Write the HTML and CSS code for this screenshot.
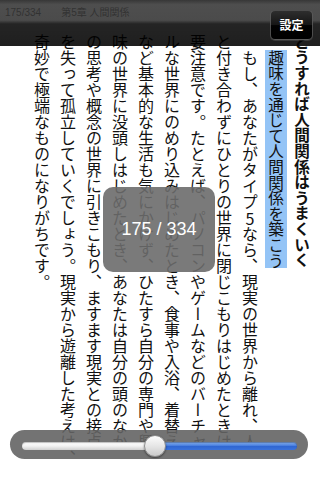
FILE: index.html
```html
<!DOCTYPE html>
<html lang="ja">
<head>
<meta charset="utf-8">
<title>Reader</title>
<link rel="stylesheet" href="styles.css">
</head>
<body>
<div class="screen">
  <div class="page">
    <div class="running-head"><span class="folio">175/334</span><span class="chapter">第5章 人間関係</span></div>
    <div class="text">
      <h1 class="heading">どうすれば人間関係はうまくいく</h1>
      <h2 class="sub">　<span class="mark">趣味を通じて人間関係を築こう</span></h2>
      <p class="body">　もし、あなたがタイプ<span class="tcy">5</span>なら、現実の世界から離れ、人<br>と付き合わずにひとりの世界に閉じこもりはじめたときは<br>要注意です。たとえば、パソコンやゲームなどのバーチャ<br>ルな世界にのめり込みはじめたとき、食事や入浴、着替え<br>など基本的な生活も気にかけず、ひたすら自分の専門や興<br>味の世界に没頭しはじめたとき、あなたは自分の頭のなか<br>の思考や概念の世界に引きこもり、ますます現実との接点<br>を失って孤立していくでしょう。現実から遊離した考えは、<br>奇妙で極端なものになりがちです。</p>
    </div>
  </div>
  <div class="toolbar"><button class="settings">設定</button></div>
  <div class="pager">175 / 334</div>
  <div class="slider">
    <div class="track"><span class="done"></span><span class="rest"></span></div>
    <span class="thumb"></span>
  </div>
</div>
</body>
</html>
```
FILE: styles.css
```css
html, body {
  margin: 0;
  padding: 0;
}
body {
  width: 320px;
  height: 480px;
  overflow: hidden;
  background: #fff;
  font-family: "Noto Sans CJK JP", sans-serif;
}
.screen {
  position: relative;
  width: 320px;
  height: 480px;
  overflow: hidden;
}
.page {
  display: flex;
  flex-direction: column;
}
.running-head {
  height: 34px;
  box-sizing: border-box;
  padding: 7px 0 0 5px;
  display: flex;
  gap: 20px;
  font-family: "Liberation Sans", "Noto Sans CJK JP", sans-serif;
  font-size: 10px;
  line-height: 12px;
  color: #7a7a7a;
}
.text {
  writing-mode: vertical-rl;
  text-orientation: mixed;
  width: 315px;
  height: 416px;
  font-size: 16px;
  line-height: 26px;
  color: #111;
  white-space: nowrap;
}
.heading, .sub, .body {
  margin: 0;
  font-size: 16px;
  line-height: 26px;
}
.heading, .sub {
  font-size: 15.6px;
}
.heading {
  font-weight: 700;
}
.sub {
  font-weight: 400;
}
.mark {
  background: #94c4f6;
}
.tcy {
  text-combine-upright: all;
}
.toolbar {
  position: absolute;
  top: 0;
  left: 0;
  right: 0;
  height: 46px;
  box-sizing: border-box;
  padding: 10px 7px 0 0;
  display: flex;
  justify-content: flex-end;
  align-items: flex-start;
  background: linear-gradient(to bottom,
    rgba(20,20,20,0.85) 0%,
    rgba(34,34,34,0.80) 10%,
    rgba(30,30,30,0.80) 44%,
    rgba(0,0,0,0.86) 52%,
    rgba(0,0,0,0.88) 100%);
}
.settings {
  width: 43px;
  height: 30px;
  padding: 0;
  border-radius: 5px;
  border: 1px solid rgba(110,110,110,0.7);
  background: linear-gradient(to bottom, #2e2e2e 0%, #151515 50%, #020202 52%, #000 100%);
  box-shadow: 0 1px 0 rgba(255,255,255,0.12);
  color: #fff;
  font-family: "Noto Sans CJK JP", sans-serif;
  font-weight: 700;
  font-size: 12px;
  line-height: 28px;
}
.pager {
  position: absolute;
  left: 103px;
  top: 187px;
  width: 112px;
  height: 85px;
  border-radius: 10px;
  background: rgba(108,108,108,0.9);
  color: #fff;
  font-family: "Liberation Sans", sans-serif;
  font-size: 18px;
  display: flex;
  align-items: center;
  justify-content: center;
  white-space: pre;
}
.slider {
  position: absolute;
  left: 10px;
  top: 430px;
  width: 298px;
  height: 29px;
  box-sizing: border-box;
  padding: 0 11px 0 12px;
  border-radius: 15px;
  background: rgba(100,100,100,0.9);
  display: flex;
  align-items: center;
}
.track {
  flex: 1;
  height: 8px;
  margin-top: 2px;
  display: flex;
}
.done {
  width: 133px;
  border-radius: 4px 0 0 4px;
  background: linear-gradient(to bottom, #ffffff 0%, #f2f2f2 50%, #cfcfcf 100%);
  box-shadow: inset 0 1px 1px rgba(0,0,0,0.25);
}
.rest {
  flex: 1;
  border-radius: 0 4px 4px 0;
  background: linear-gradient(to bottom, #8ab3f0 0%, #4a80df 45%, #2f66d2 55%, #3a72dc 100%);
  box-shadow: inset 0 1px 1px rgba(0,0,0,0.3);
}
.thumb {
  position: absolute;
  left: 134px;
  top: 5px;
  width: 22px;
  height: 22px;
  box-sizing: border-box;
  border-radius: 50%;
  border: 1px solid #8c8c8c;
  background: linear-gradient(to bottom, #fcfcfc 0%, #e6e6e6 50%, #cacaca 100%);
  box-shadow: 0 1px 2px rgba(0,0,0,0.45);
}
```
